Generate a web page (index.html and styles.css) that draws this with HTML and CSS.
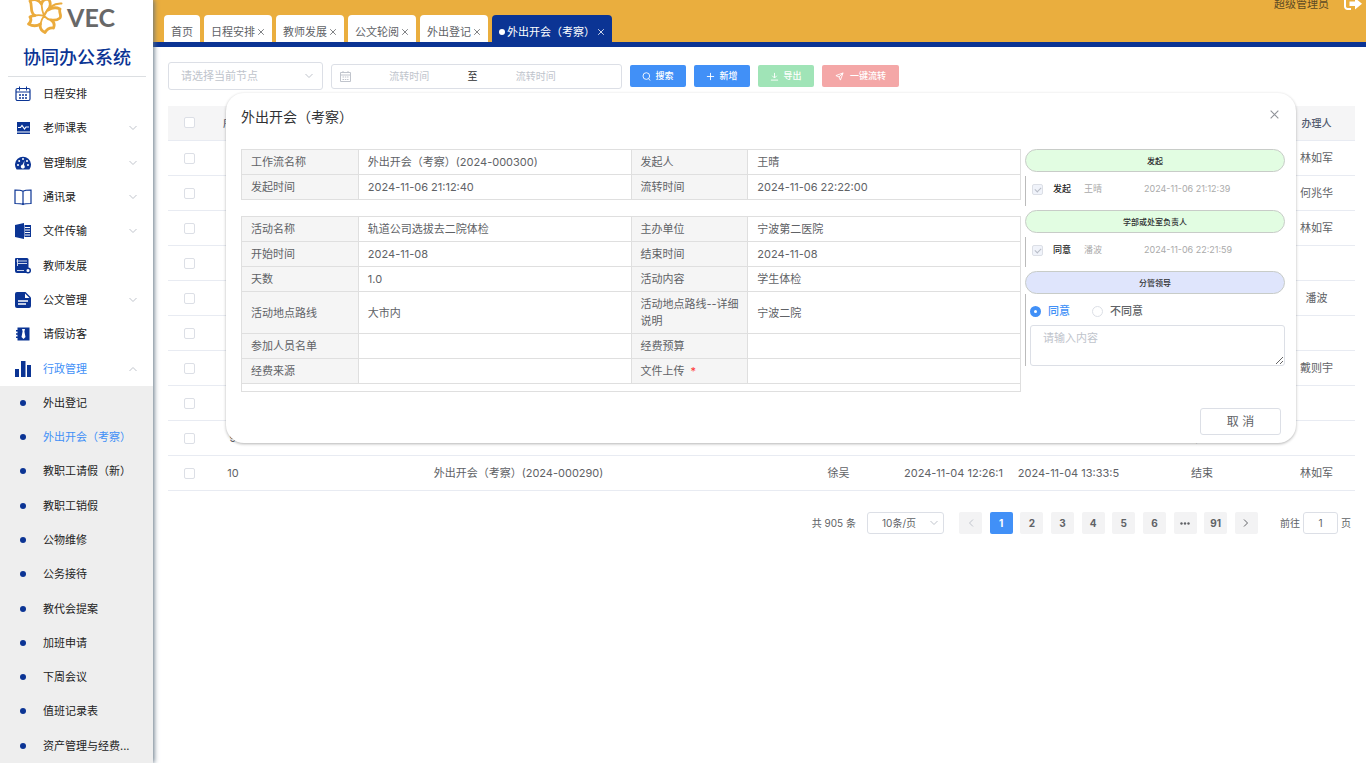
FILE: index.html
```html
<!DOCTYPE html>
<html lang="zh-CN">
<head>
<meta charset="utf-8">
<title>协同办公系统</title>
<link rel="stylesheet" href="styles.css">
</head>
<body>
<svg class="defs" aria-hidden="true">
  <symbol id="down" viewBox="0 0 10 10"><path d="M1.5 3l3.5 3.5L8.500 3" fill="none" stroke="currentColor"/></symbol>
  <symbol id="cross" viewBox="0 0 10 10"><path d="M1.500 1.500l7 7M8.500 1.500l-7 7" fill="none" stroke="currentColor"/></symbol>
</svg>
<div class="app">
  <aside class="sidebar">
    <div class="logo">
      <svg width="38" height="36" viewBox="0 0 38 36" fill="none" stroke="#ebab3c" stroke-width="2.800" stroke-linejoin="round" stroke-linecap="round">
        <path d="M4 2C8-1 13 1 15.500 5 16 2 18.500 0 22 0c3.500 3 2.500 8 0 11 4-2.500 9-2.500 12-1-1.500 3 2 6.500 0 9-3 2.500-6 2.500-9 2 3.500 2 3.500 5.500 2.500 8-4-.5-6.500 1-8.500 4.500-4-2-5.500-5-4.500-8.500-4 2.500-8.500 2-12 0 2.500-2 3-4.500 1.500-7 1.500-1 3-1.500 5-1.500C3 13.500 7 6 4 2z"/>
        <path d="M15.500 5c.2 4 1 8 2.500 12M9 16.500c3-.5 6-.5 9 .5M14.500 25c.5-3 1.500-5.500 3.500-8M25 21c-2.500-.5-5-2-7-4" stroke-width="1.800"/>
        <path d="M18 17C21 9 28 4 35.500 4.500" stroke-width="2"/>
      </svg>
      <span>VEC</span>
    </div>
    <h1 class="brand">协同办公系统</h1>
    <ul class="menu">
      <li><a href="#"><svg class="ico" viewBox="0 0 18 18"><rect x="2" y="3.500" width="14" height="12" rx="1.500" fill="none" stroke="currentColor" stroke-width="1.200"/><path d="M2 7h14M5.500 1.500v4M12.500 1.500v4" stroke="currentColor"/><path d="M5 10h8M5 13h8" stroke="currentColor" stroke-width="1.500" stroke-dasharray="2 1"/></svg><span>日程安排</span></a></li>
      <li><a href="#"><svg class="ico" viewBox="0 0 18 18"><path d="M3 3h13v9.500H3zM3 13.500h13V15H3z" fill="currentColor"/><path d="M4 8.500h2.500L8 6.500l2.500 3.500L12 8h3" fill="none" stroke="#fff" stroke-width="1.200"/></svg><span>老师课表</span><svg class="chev"><use href="#down"/></svg></a></li>
      <li><a href="#"><svg class="ico" viewBox="0 0 18 18"><path d="M2.600 15.500A8 8 0 1 1 15.400 15.500z" fill="currentColor"/><g fill="#fff"><circle cx="4" cy="11" r="1"/><circle cx="5.200" cy="7" r="1"/><circle cx="9" cy="5" r="1"/><circle cx="14" cy="11" r="1"/><circle cx="13" cy="7" r="1"/><path d="M10.500 6.500L10 11a2 2 0 1 1-1.200-.4z"/></g></svg><span>管理制度</span><svg class="chev"><use href="#down"/></svg></a></li>
      <li><a href="#"><svg class="ico" viewBox="0 0 18 18"><path d="M9 3.200C7 2 4 2 1 2v13.500c3 0 6 0 8 1 2-1 5-1 8-1V2c-3 0-6 0-8 1.200zV16" fill="none" stroke="currentColor" stroke-width="1.200"/></svg><span>通讯录</span><svg class="chev"><use href="#down"/></svg></a></li>
      <li><a href="#"><svg class="ico" viewBox="0 0 18 18"><path d="M1 3l9-2v16l-9-2zM10.500 3H17v12h-6.500z" fill="currentColor"/><path d="M11 5.500h5M11 8h5M11 10.500h5M11 13h5" stroke="#fff"/></svg><span>文件传输</span><svg class="chev"><use href="#down"/></svg></a></li>
      <li><a href="#"><svg class="ico" viewBox="0 0 18 18"><path d="M2 1h11a1.500 1.500 0 0 1 1.500 1.500V16H3a2 2 0 0 1-2-2V2a1 1 0 0 1 1-1z" fill="currentColor"/><path d="M2.500 4H13M4 6.500h9M3.500 2v7M3 13.500h7" stroke="#fff" stroke-width=".8"/><circle cx="14" cy="13.500" r="2.300" fill="#fff" stroke="currentColor" stroke-width="1.500"/></svg><span>教师发展</span></a></li>
      <li><a href="#"><svg class="ico" viewBox="0 0 18 18"><path d="M3 1h8.500L17 6.500V15a2 2 0 0 1-2 2H3a2 2 0 0 1-2-2V3a2 2 0 0 1 2-2z" fill="currentColor"/><path d="M11 2.500V7h4.500z" fill="#fff"/><path d="M4 10h10M4 13h8" stroke="#fff" stroke-width="1.300"/></svg><span>公文管理</span><svg class="chev"><use href="#down"/></svg></a></li>
      <li><a href="#"><svg class="ico" viewBox="0 0 18 18"><path d="M3.500 2.500h12v13h-12zM2 5h3v1.500H2zM2 8.300h3v1.500H2zM2 11.500h3V13H2z" fill="currentColor"/><path d="M8 4h3l-.6 2.500L11.500 12 9.500 14l-2-2 1.100-5.500z" fill="#fff"/></svg><span>请假访客</span></a></li>
      <li class="open"><a href="#"><svg class="ico" viewBox="0 0 18 18"><path d="M1 9h4v8H1zM7 1h4.500v16H7zM13 5h4v12h-4z" fill="currentColor"/></svg><span>行政管理</span><svg class="chev up"><use href="#down"/></svg></a></li>
      <li class="sub"><ul>
        <li><a href="#">外出登记</a></li>
        <li class="current"><a href="#">外出开会（考察）</a></li>
        <li><a href="#">教职工请假（新）</a></li>
        <li><a href="#">教职工销假</a></li>
        <li><a href="#">公物维修</a></li>
        <li><a href="#">公务接待</a></li>
        <li><a href="#">教代会提案</a></li>
        <li><a href="#">加班申请</a></li>
        <li><a href="#">下周会议</a></li>
        <li><a href="#">值班记录表</a></li>
        <li><a href="#">资产管理与经费...</a></li>
      </ul></li>
    </ul>
  </aside>

  <div class="main">
    <header class="topbar">
      <nav class="tabs">
        <a class="tab" href="#">首页</a>
        <a class="tab" href="#">日程安排<svg><use href="#cross"/></svg></a>
        <a class="tab" href="#">教师发展<svg><use href="#cross"/></svg></a>
        <a class="tab" href="#">公文轮阅<svg><use href="#cross"/></svg></a>
        <a class="tab" href="#">外出登记<svg><use href="#cross"/></svg></a>
        <a class="tab active" href="#"><i></i>外出开会（考察）<svg><use href="#cross"/></svg></a>
      </nav>
      <div class="user">
        <span>超级管理员</span>
        <button aria-label="退出"><svg width="18" height="14" viewBox="0 0 18 14"><path d="M7 1H3.500A2.500 2.500 0 0 0 1 3.500v6A2.500 2.500 0 0 0 3.500 12H7" fill="none" stroke="#fff" stroke-width="2"/><path d="M5.500 4.500H11V1l7 5.700-7 5.800V9H5.500z" fill="#fff"/></svg></button>
      </div>
    </header>

    <main class="content">
      <form class="filters">
        <div class="node"><input type="text" placeholder="请选择当前节点" aria-label="当前节点"><svg class="chev"><use href="#down"/></svg></div>
        <div class="range">
          <svg width="11" height="11" viewBox="0 0 11 11" fill="none" stroke="#c0c4cc"><path d="M.5 1.500h10v9H.5zM.5 4h10M3 0v2M8 0v2"/><path d="M2.500 6h6M2.500 8.500h6" stroke-dasharray="1.500 .8"/></svg>
          <input type="text" placeholder="流转时间" aria-label="流转时间起"><span>至</span><input type="text" placeholder="流转时间" aria-label="流转时间止">
        </div>
        <button type="button" class="btn"><svg viewBox="0 0 10 10"><circle cx="4.800" cy="4.500" r="3.700"/><path d="M7.500 7.500L9 9.500"/></svg>搜索</button>
        <button type="button" class="btn"><svg viewBox="0 0 10 10"><path d="M5 1v8M1 5h8"/></svg>新增</button>
        <button type="button" class="btn green"><svg viewBox="0 0 10 10"><path d="M5 1v5.500M2.500 4.200L5 6.700l2.500-2.500M1 9h8"/></svg>导出</button>
        <button type="button" class="btn pink"><svg viewBox="0 0 10 10"><path d="M1 4l8-3-3 8-1.500-3.500zM4.500 5.500L9 1"/></svg>一键流转</button>
      </form>

      <table class="list">
        <colgroup><col class="c-check"><col class="c-index"><col><col class="c-person"><col class="c-time"><col class="c-time"><col class="c-state"><col class="c-owner"></colgroup>
        <thead><tr><th><input type="checkbox" aria-label="全选"></th><th>序号</th><th></th><th></th><th></th><th></th><th></th><th>办理人</th></tr></thead>
        <tbody>
          <tr><td><input type="checkbox" aria-label="1"></td><td>1</td><td></td><td></td><td></td><td></td><td></td><td>林如军</td></tr>
          <tr><td><input type="checkbox" aria-label="2"></td><td>2</td><td></td><td></td><td></td><td></td><td></td><td>何兆华</td></tr>
          <tr><td><input type="checkbox" aria-label="3"></td><td>3</td><td></td><td></td><td></td><td></td><td></td><td>林如军</td></tr>
          <tr><td><input type="checkbox" aria-label="4"></td><td>4</td><td></td><td></td><td></td><td></td><td></td><td></td></tr>
          <tr><td><input type="checkbox" aria-label="5"></td><td>5</td><td></td><td></td><td></td><td></td><td></td><td>潘波</td></tr>
          <tr><td><input type="checkbox" aria-label="6"></td><td>6</td><td></td><td></td><td></td><td></td><td></td><td></td></tr>
          <tr><td><input type="checkbox" aria-label="7"></td><td>7</td><td></td><td></td><td></td><td></td><td></td><td>戴则宇</td></tr>
          <tr><td><input type="checkbox" aria-label="8"></td><td>8</td><td></td><td></td><td></td><td></td><td></td><td></td></tr>
          <tr><td><input type="checkbox" aria-label="9"></td><td>9</td><td>外出开会（考察）(2024-000291)</td><td>王晴</td><td></td><td></td><td>结束</td><td></td></tr>
          <tr><td><input type="checkbox" aria-label="10"></td><td>10</td><td>外出开会（考察）(2024-000290)</td><td>徐吴</td><td>2024-11-04 12:26:1</td><td>2024-11-04 13:33:5</td><td>结束</td><td>林如军</td></tr>
        </tbody>
      </table>

      <div class="pager">
        <span>共 905 条</span>
        <div class="size"><select aria-label="每页条数"><option>10条/页</option></select><svg class="chev"><use href="#down"/></svg></div>
        <div class="pages">
          <button aria-label="上一页" disabled><svg class="chev left"><use href="#down"/></svg></button>
          <button class="on">1</button><button>2</button><button>3</button><button>4</button><button>5</button><button>6</button>
          <button aria-label="更多"><svg width="10" height="3" viewBox="0 0 10 3" fill="#606266"><circle cx="1.500" cy="1.500" r="1.200"/><circle cx="5" cy="1.500" r="1.200"/><circle cx="8.500" cy="1.500" r="1.200"/></svg></button>
          <button>91</button>
          <button aria-label="下一页"><svg class="chev right"><use href="#down"/></svg></button>
        </div>
        <label class="jump">前往<input type="text" value="1">页</label>
      </div>
    </main>

    <section class="dialog" role="dialog" aria-labelledby="dlg-title">
      <header><h2 id="dlg-title">外出开会（考察）</h2><button aria-label="关闭"><svg width="11" height="11"><use href="#cross"/></svg></button></header>
      <div class="body">
        <div class="details">
          <table class="desc">
            <tr><th>工作流名称</th><td>外出开会（考察）(2024-000300)</td><th>发起人</th><td>王晴</td></tr>
            <tr><th>发起时间</th><td>2024-11-06 21:12:40</td><th>流转时间</th><td>2024-11-06 22:22:00</td></tr>
          </table>
          <table class="desc">
            <tr><th>活动名称</th><td>轨道公司选拔去二院体检</td><th>主办单位</th><td>宁波第二医院</td></tr>
            <tr><th>开始时间</th><td>2024-11-08</td><th>结束时间</th><td>2024-11-08</td></tr>
            <tr><th>天数</th><td>1.0</td><th>活动内容</th><td>学生体检</td></tr>
            <tr><th>活动地点路线</th><td>大市内</td><th>活动地点路线--详细说明</th><td>宁波二院</td></tr>
            <tr><th>参加人员名单</th><td></td><th>经费预算</th><td></td></tr>
            <tr><th>经费来源</th><td></td><th>文件上传<em>*</em></th><td></td></tr>
            <tr class="tail"><td colspan="4"></td></tr>
          </table>
        </div>
        <div class="flow">
          <h3>发起</h3>
          <div class="step"><label><input type="checkbox" checked disabled>发起</label><span class="who">王晴</span><time>2024-11-06 21:12:39</time></div>
          <h3>学部或处室负责人</h3>
          <div class="step"><label><input type="checkbox" checked disabled>同意</label><span class="who">潘波</span><time>2024-11-06 22:21:59</time></div>
          <h3 class="now">分管领导</h3>
          <div class="decide">
            <div class="radios"><label class="picked"><input type="radio" name="r" checked>同意</label><label><input type="radio" name="r">不同意</label></div>
            <textarea placeholder="请输入内容" aria-label="意见"></textarea>
          </div>
        </div>
      </div>
      <footer><button class="cancel">取 消</button></footer>
    </section>
  </div>
</div>
</body>
</html>
```

FILE: styles.css
```css
* { box-sizing: border-box; }
body { margin: 0; overflow: hidden; background: #fff; color: #606266; font: 11px/16px Inter, "Noto Sans CJK SC", sans-serif; }
ul { list-style: none; margin: 0; padding: 0; }
a { color: inherit; text-decoration: none; }
h1, h2, h3 { margin: 0; font-weight: 400; }
button, input, textarea, select { font: inherit; color: inherit; margin: 0; padding: 0; border: 0; background: none; outline: 0; min-width: 0; }
svg { display: block; flex: none; }
::placeholder { color: #c0c4cc; opacity: 1; }
.defs { position: absolute; width: 0; height: 0; }
.app { display: flex; height: 100vh; min-height: 700px; }
.chev { width: 10px; height: 10px; color: #c0c4cc; }
.chev.up { transform: rotate(180deg); }
.chev.left { transform: rotate(90deg); }
.chev.right { transform: rotate(-90deg); color: #606266; }

.sidebar { position: relative; z-index: 1; flex: none; width: 153px; display: flex; flex-direction: column; box-shadow: 1px 0 5px #5f7180; background: #fff; }
.logo { display: flex; align-items: center; justify-content: center; gap: 3px; height: 34px; padding-right: 12px; }
.logo span { font: 700 25px/34px Lato, sans-serif; color: #686868; }
.brand { margin: 0 7px 0 8px; height: 43px; padding-top: 12px; border-bottom: 1px solid #dcdfe2; font-size: 18px; line-height: 24px; font-weight: 500; text-align: center; color: #0b3494; }
.menu { flex: 1; display: flex; flex-direction: column; color: #222; }
.menu > li { flex: 1; display: flex; }
.menu > li > a { flex: 1; display: flex; align-items: center; padding: 0 15px 0 14px; }
.menu > li > a span { flex: 1; margin-left: 11px; }
.ico { width: 18px; height: 18px; color: #0b3494; }
.menu .open span, .menu .current { color: #4190f7; }
.menu > .sub { flex: 11; background: #eee; }
.sub ul { flex: 1; display: flex; flex-direction: column; }
.sub li { flex: 1; display: flex; align-items: center; }
.sub li::before { content: ""; width: 6px; height: 6px; margin: 0 17px 0 20px; border-radius: 50%; background: #0b3494; }

.main { position: relative; flex: 1; min-width: 0; }
.topbar { display: flex; justify-content: space-between; height: 47px; padding: 0 4px 0 11px; background: #eaae3e; border-bottom: 5px solid #0b3494; }
.tabs { display: flex; align-items: flex-end; gap: 4px; }
.tab { display: flex; align-items: center; height: 27px; padding: 6px 7px 0; border-radius: 4px 4px 0 0; background: #fff; white-space: nowrap; }
.tab svg { width: 8px; height: 8px; margin-left: 2px; }
.tab.active { background: #0b3494; color: #fff; }
.tab i { width: 6px; height: 6px; margin-right: 2px; border-radius: 50%; background: #fff; }
.user { display: flex; align-items: center; gap: 15px; height: 8px; line-height: 8px; color: #5d4a24; }

.content { padding: 15px 11px 0 15px; }
.filters { display: flex; align-items: center; height: 28px; gap: 8px; }
.node { display: flex; align-items: center; width: 155px; height: 28px; padding: 0 8px 0 12px; border: 1px solid #dcdfe6; border-radius: 3px; }
.node input { flex: 1; }
.range { display: flex; align-items: center; width: 291px; height: 25px; padding: 0 27px 0 8px; border: 1px solid #dcdfe6; border-radius: 3px; font-size: 10px; }
.range input { flex: 1; text-align: center; }
.range span { color: #303133; }
.btn { display: flex; align-items: center; justify-content: center; gap: 4px; width: 56px; height: 22px; border-radius: 2px; background: #4190f7; color: #fff; font-size: 9px; font-weight: 500; }
.btn svg { width: 9px; height: 9px; fill: none; stroke: #fff; stroke-width: 1; }
.btn.green { background: #a0e4b7; }
.btn.pink { width: 77px; background: #f4a7a7; gap: 6px; }

.list { width: 100%; margin-top: 16px; border-collapse: collapse; table-layout: fixed; text-align: center; }
.list th, .list td { height: 35px; padding: 0; border-bottom: 1px solid #e8ebf2; white-space: nowrap; }
.list td { padding-top: 1px; }
.list th { height: 34px; background: #f5f5f6; color: #515a6e; font-size: 10px; font-weight: 500; }
.c-check { width: 42px; }
.c-index { width: 46px; }
.c-person, .c-time { width: 115px; }
.c-state { width: 152px; }
.c-owner { width: 77px; }
input[type="checkbox"], input[type="radio"] { appearance: none; display: block; flex: none; width: 11px; height: 11px; border: 1px solid #dcdfe6; border-radius: 2px; background: #fff; }
.list input { margin: auto; }

.pager { display: flex; align-items: center; justify-content: flex-end; margin-top: 21px; padding-right: 4px; height: 23px; font-size: 10px; }
.size { display: flex; align-items: center; width: 77px; height: 22px; margin: 0 15px 0 11px; padding: 0 4px 0 14px; border: 1px solid #dcdfe6; border-radius: 3px; }
.size select { flex: 1; appearance: none; }
.pages { display: flex; justify-content: space-between; width: 299px; }
.pages button { display: flex; align-items: center; justify-content: center; width: 23px; height: 22px; border-radius: 2px; background: #f3f3f4; font-weight: 700; }
.pages .on { background: #4190f7; color: #fff; }
.jump { display: flex; align-items: center; margin-left: 22px; }
.jump input { width: 35px; height: 22px; margin: 0 3px; border: 1px solid #dcdfe6; border-radius: 3px; text-align: center; }

.dialog { position: absolute; z-index: 2; top: 93px; left: 73px; right: 70px; padding: 0 11px 8px 15px; border-radius: 18px; background: #fff; box-shadow: 0 1px 3px rgba(0, 0, 0, .3); }
.dialog > header { display: flex; align-items: flex-start; justify-content: space-between; height: 48px; padding: 14px 5px 0 0; }
.dialog h2 { font-size: 14px; line-height: 20px; color: #303133; }
.dialog header svg { margin-top: 2px; color: #909399; }
.body { display: flex; gap: 4px; padding-top: 8px; }
.details { flex: 1; }
.desc { width: 100%; margin-bottom: 16px; border-collapse: collapse; table-layout: fixed; line-height: 17px; }
.desc th, .desc td { height: 25px; padding: 4px 5px 3px 9px; border: 1px solid #dfdfdf; text-align: left; font-weight: 400; }
.desc th { width: 15%; background: #f5f5f5; }
.desc em { margin-left: 6px; color: #f33; font-style: normal; }
.desc .tail td { height: 8px; padding: 0; }
.details .desc:last-child { margin-bottom: 0; }
.flow { width: 260px; }
.flow h3 { height: 23px; border: 1px solid #c8ccc8; border-radius: 12px; background: #e2fde2; color: #303133; font-size: 8px; line-height: 22px; font-weight: 500; text-align: center; }
.flow h3.now { background: #dfe5fc; }
.step { display: flex; align-items: center; height: 30px; margin: 4px 0; padding: 0 7px 4px 6px; border-left: 1px solid #bbb; font-size: 9px; color: #aaa; }
.step label { display: flex; align-items: center; gap: 10px; width: 52px; color: #222; font-weight: 500; }
.step input { background: #f0f3fa; position: relative; }
.step input::after { content: ""; position: absolute; left: 3px; top: 1px; width: 3px; height: 5px; border: solid #b8bcc6; border-width: 0 1px 1px 0; transform: rotate(45deg); }
.who { width: 60px; }
.decide { padding: 9px 0 0 4px; border-left: 1px solid #bbb; }
.radios { display: flex; gap: 22px; height: 16px; }
.radios label { display: flex; align-items: center; gap: 7px; font-weight: 500; }
.radios .picked { color: #4190f7; }
.decide input { border-radius: 50%; }
.decide input:checked { border: 4px solid #4190f7; }
.decide textarea { display: block; width: 100%; height: 41px; margin-top: 6px; border: 1px solid #dcdfe6; border-radius: 3px; padding: 4px 12px; resize: vertical; }
.dialog footer { display: flex; justify-content: flex-end; padding: 16px 4px 0 0; }
.cancel { width: 81px; height: 27px; border: 1px solid #dcdfe6; border-radius: 3px; font-size: 12px; }
```
